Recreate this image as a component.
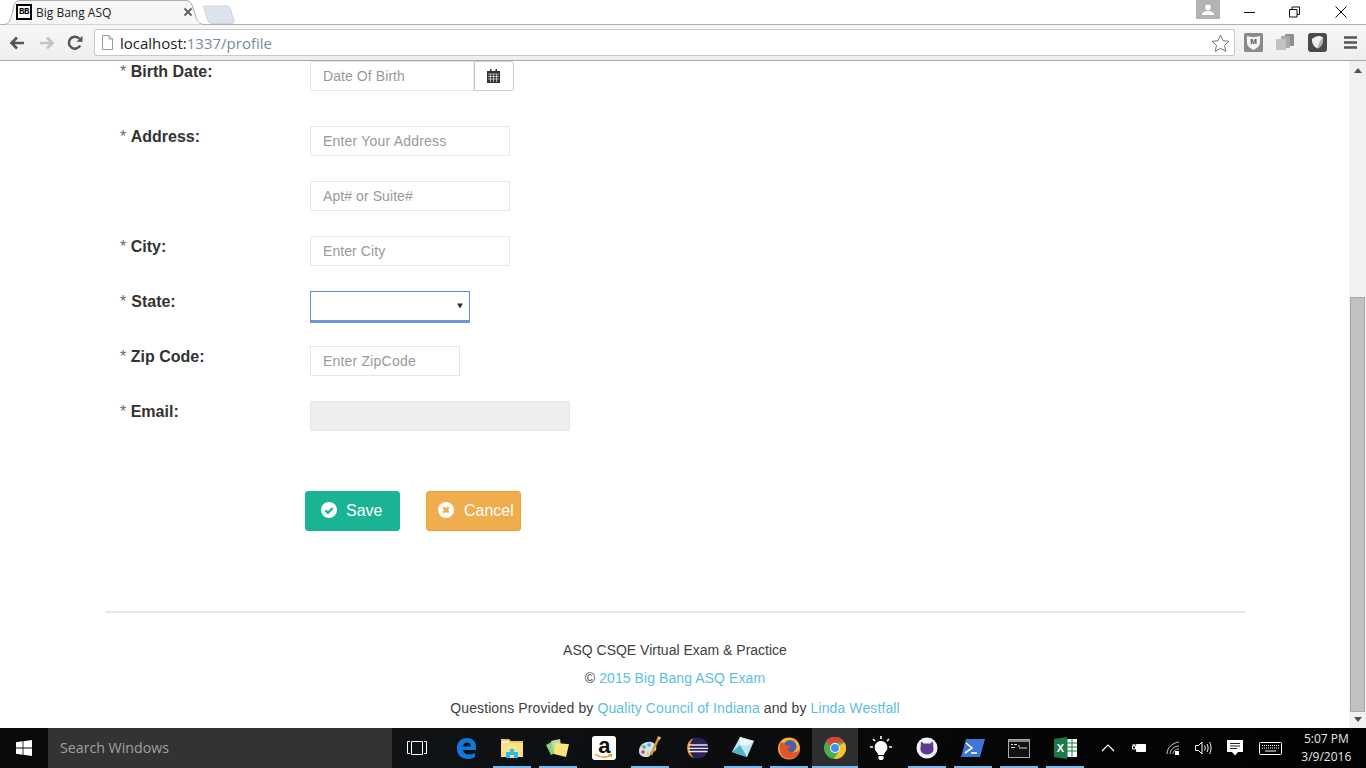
<div class="screen">
  <header class="chrome">
    <div class="tabstrip">
      <div class="tab">
        <svg class="tabshape" width="200" height="25" viewBox="0 0 200 25"><path d="M0 24.500C5 24 6 21 8 14L10 5C11 2 13 .5 16 .5H182C185 .5 187 2 188 5L191 14C193 21 195 24 200 24.500" fill="#f6f6f6" stroke="#b0b0b0"/></svg>
        <span class="favicon">BB</span>
        <span class="tabtitle">Big Bang ASQ</span>
        <svg class="tabclose" width="10" height="10" viewBox="0 0 10 10"><path d="M1.500 1.500l7 7M8.500 1.500l-7 7" stroke="#5a5a5a" stroke-width="1.800"/></svg>
      </div>
      <svg class="newtab" width="32" height="19" viewBox="0 0 32 19"><path d="M.5 1H24C26 1 27 2 27.500 4L31 16C31.500 18 30 18.500 29 18.500H9C7 18.500 6 18 5 16L1 3C.7 2 0 1 .5 1Z" fill="#dde3ec" stroke="#cfd4dc"/></svg>
      <div class="spacer"></div>
      <div class="avatar"><svg width="12" height="12" viewBox="0 0 12 12"><circle cx="6" cy="3.400" r="2.800" fill="#fff"/><path d="M0 11c0-3 3-4 6-4s6 1 6 4z" fill="#fff"/></svg></div>
      <div class="winbtns">
        <svg width="12" height="12" viewBox="0 0 12 12"><path d="M0 6.500h11" stroke="#111"/></svg>
        <svg width="12" height="12" viewBox="0 0 12 12"><path d="M.5 3.500h7.500v7.500h-7.500zM3 3.500V1h7.500v7.500H8" fill="none" stroke="#111"/></svg>
        <svg width="14" height="14" viewBox="0 0 14 14"><path d="M1.500 1.500l11 11M12.500 1.500l-11 11" stroke="#111"/></svg>
      </div>
    </div>
    <div class="toolbar">
      <svg class="nav" width="16" height="14" viewBox="0 0 16 14"><path d="M15 7H3M8 1.500 2.500 7 8 12.500" fill="none" stroke="#555" stroke-width="2.600"/></svg>
      <svg class="nav fwd" width="16" height="14" viewBox="0 0 16 14"><path d="M1 7h12M8 1.500 13.500 7 8 12.500" fill="none" stroke="#c4c4c4" stroke-width="2.600"/></svg>
      <svg class="nav reload" width="16" height="16" viewBox="0 0 16 16"><path d="M13.200 10.500A6 6 0 1 1 12.500 3.800" fill="none" stroke="#555" stroke-width="2.500"/><path d="M9.500 6.800H15.500V.8z" fill="#555"/></svg>
      <div class="omnibox">
        <svg width="11" height="15" viewBox="0 0 11 15"><path d="M.5.5H7L10.500 4V14.500H.5zM7 .5V4h3.500" fill="#fff" stroke="#9a9a9a"/></svg>
        <span class="url"><b>localhost:</b>1337/profile</span>
        <svg class="star" width="19" height="18" viewBox="0 0 19 18"><path d="M9.500 1l2.500 5.700 6 .6-4.500 4.100 1.300 6-5.300-3.100-5.300 3.100 1.300-6L1 7.300l6-.6z" fill="#fff" stroke="#777"/></svg>
      </div>
      <div class="exts">
        <svg width="19" height="19" viewBox="0 0 19 19"><rect width="19" height="19" rx="1.500" fill="#8b8b8b"/><path d="M3 3c4 1.200 9 1.200 13 0v7c0 3-3 5-6.500 7C6 15 3 13 3 10z" fill="#f4f4f4"/><text x="9.500" y="11" font-size="8" font-weight="700" text-anchor="middle" fill="#555" font-family="Liberation Sans">M</text></svg>
        <svg width="19" height="18" viewBox="0 0 19 18"><rect x="9" y="1" width="9" height="12" rx="1" fill="#8f8f8f"/><rect x="5" y="3" width="9" height="12" rx="1" fill="#a9a9a9"/><rect x="0" y="6" width="10" height="11" rx="1" fill="#c2c2c2"/></svg>
        <svg width="19" height="19" viewBox="0 0 19 19"><rect width="19" height="19" rx="3" fill="#4a4a4a"/><path d="M4 6c2-2 5-3 7-3 1.500 0 3 .6 4 1.500.5 5-1.500 9-5.500 11C6 14 3.500 10 4 6z" fill="#f0f0f0"/><path d="M15 4.500C13 6 11 9 9.500 15.500 13.500 13.500 15.500 9.500 15 4.500z" fill="#b0b0b0"/></svg>
      </div>
      <svg class="menu" width="14" height="13" viewBox="0 0 14 13"><path d="M0 1.500h13M0 6.500h13M0 11.500h13" stroke="#555" stroke-width="2.600"/></svg>
    </div>
  </header>

  <div class="viewport">
    <main class="page">
      <form class="form">
        <div class="row birth">
          <div class="label"><i>*</i> <b>Birth Date:</b></div>
          <div class="group">
            <input class="w164" placeholder="Date Of Birth" />
            <button type="button" class="calbtn" aria-label="Open calendar">
              <svg width="13" height="14" viewBox="0 0 13 14"><path d="M0 2h13v12H0z" fill="#333"/><path d="M3 0h1.500v3H3zM8.500 0H10v3H8.500z" fill="#333"/><path d="M1 5h11M1 7.500h11M1 10h11M3.500 5v8M6.500 5v8M9.500 5v8" stroke="#fff" stroke-width=".6"/></svg>
            </button>
          </div>
        </div>
        <div class="row">
          <div class="label"><i>*</i> <b>Address:</b></div>
          <input class="w200 wide" placeholder="Enter Your Address" />
        </div>
        <div class="row">
          <div class="label"></div>
          <input class="w200" placeholder="Apt# or Suite#" />
        </div>
        <div class="row">
          <div class="label"><i>*</i> <b>City:</b></div>
          <input class="w200" placeholder="Enter City" />
        </div>
        <div class="row">
          <div class="label"><i>*</i><b class="state">State:</b></div>
          <div class="selectwrap">
            <select aria-label="State"><option></option></select>
            <svg width="6" height="6" viewBox="0 0 6 6"><path d="M0 .5h6L3 5.500z" fill="#333"/></svg>
          </div>
        </div>
        <div class="row">
          <div class="label"><i>*</i> <b>Zip Code:</b></div>
          <input class="w150 wide" placeholder="Enter ZipCode" />
        </div>
        <div class="row">
          <div class="label"><i>*</i> <b>Email:</b></div>
          <input class="w260" disabled />
        </div>
        <div class="actions">
          <button type="button" class="btn save">
            <svg width="16" height="16" viewBox="0 0 16 16"><circle cx="8" cy="8" r="8" fill="#fff"/><path d="M4.300 8.200l2.600 2.600 4.800-4.800" fill="none" stroke="#1ab394" stroke-width="2.300"/></svg>
            Save
          </button>
          <button type="button" class="btn cancel">
            <svg width="16" height="16" viewBox="0 0 16 16"><circle cx="8" cy="8" r="8" fill="#fff"/><path d="M5.300 5.300l5.400 5.400M10.700 5.300l-5.400 5.400" stroke="#f0ad4e" stroke-width="2.500"/></svg>
            Cancel
          </button>
        </div>
      </form>
      <footer class="footer">
        <p>ASQ CSQE Virtual Exam &amp; Practice</p>
        <p class="p2">© <a href="#top">2015 Big Bang ASQ Exam</a></p>
        <p class="p3">Questions Provided by <a href="#top">Quality Council of Indiana</a> and by <a href="#top">Linda Westfall</a></p>
      </footer>
    </main>
    <aside class="scrollbar">
      <svg class="arrow" width="8" height="5" viewBox="0 0 8 5"><path d="M4 0l4 5H0z" fill="#505050"/></svg>
      <div class="thumb"></div>
      <svg class="arrow" width="8" height="5" viewBox="0 0 8 5"><path d="M4 5l4-5H0z" fill="#505050"/></svg>
    </aside>
  </div>

  <nav class="taskbar">
    <div class="start"><svg width="16" height="16" viewBox="0 0 16 16"><path d="M0 2.300 6.600 1.300V7.500H0zM7.400 1.200 16 0V7.500H7.400zM0 8.400H6.600V14.700L0 13.700zM7.400 8.400H16V16L7.400 14.800z" fill="#fff"/></svg></div>
    <div class="search">Search Windows</div>
    <div class="taskview"><svg width="20" height="14" viewBox="0 0 20 14"><path d="M3 .5H.5v12H3M17 .5h2.500v12H17M4.500.5h11v13h-11z" fill="none" stroke="#fff"/></svg></div>
    <div class="apps">
      <div class="app"><svg width="20" height="21" viewBox="0 0 20 21"><path d="M1 10C1 4 5 0 11 0c5 0 9 3 9 9v3H7c.5 3 3 4.500 6 4.500 2 0 4-.5 6-1.500v4c-2 1.500-5 2-7 2-6 0-11-3.500-11-10zM7 8.500h8C15 6 13 4.500 11 4.500S7.300 6 7 8.500z" fill="#0f78d8"/></svg></div>
      <div class="app on"><svg width="22" height="20" viewBox="0 0 22 20"><path d="M0 1h8l2 2h12v16H0z" fill="#f2c94e"/><path d="M0 5h22v14H0z" fill="#fbe08a"/><path d="M1 3h7v2H1z" fill="#fff"/><path d="M5 14h4v-3h4v3h4v6H5z" fill="#2cb9ee"/><path d="M9 17h4v3H9z" fill="#fbe08a"/></svg></div>
      <div class="app on"><svg width="24" height="20" viewBox="0 0 24 20"><path d="M0 7 9 2 13 13 5 17z" fill="#8fd07e"/><path d="M5 3 14 1 16 13 8 15z" fill="#b9d9a6"/><path d="M9 5l12 1 2 0-3 13-12-3z" fill="#fbe37a"/></svg></div>
      <div class="app"><div class="amazon"><span>a</span><svg width="19" height="6" viewBox="0 0 19 6"><path d="M1 1c5 4 11 4 16 1" fill="none" stroke="#f19b1c" stroke-width="1.500"/><path d="M14 1h4v3.500z" fill="#f19b1c"/></svg></div></div>
      <div class="app on"><svg width="24" height="24" viewBox="0 0 24 24"><path d="M1 15C1 9 7 5 13 6c5 1 6 5 5 8-1 2-3 1-5 2-1 2 0 5-4 5-5 0-8-2-8-6z" fill="#cfe2f2"/><circle cx="6" cy="11" r="1.800" fill="#63b04f"/><circle cx="11" cy="9" r="1.800" fill="#5da7dd"/><circle cx="5" cy="16" r="1.800" fill="#d9483b"/><circle cx="10" cy="18" r="1.500" fill="#efc440"/><path d="M21 1 13 19" stroke="#e8921e" stroke-width="2.400"/><path d="M20 0l3 1.500-1.500 3z" fill="#e7cda0"/></svg></div>
      <div class="app"><svg width="24" height="22" viewBox="0 0 24 22"><circle cx="13" cy="11" r="10.500" fill="#2c2255"/><path d="M9 .8A11 11 0 0 0 9 21.200 14 14 0 0 1 9 .8z" fill="#f7941e"/><path d="M3.500 8h19M3 11.300h20M3.500 14.500h19" stroke="#e8e6f4" stroke-width="1.300"/></svg></div>
      <div class="app on"><svg width="22" height="22" viewBox="0 0 22 22"><path d="M8 0 22 4 15 20 0 15z" fill="#bfe6ef"/><path d="M0 15 8 8 15 20z" fill="#4fb4c9"/><path d="M8 0 22 4 15 9 8 8z" fill="#e9f7fa"/></svg></div>
      <div class="app on"><svg width="22" height="23" viewBox="0 0 22 23"><circle cx="11" cy="11.500" r="11" fill="#f8b13a"/><circle cx="12" cy="9.500" r="6.500" fill="#4a5fa8"/><path d="M3 5C1 9 1 14 3.500 18c3 4 9 5 13.500 2.500 3.500-2 5-6 5-9-1 2-3 3.500-6 4-3 .3-6-1.500-6.500-4 1.500-1 3-1 4-.8C12.500 9 10.500 8 8.500 8.500 7 8 6 7 5.500 5.500 4.500 6 3.500 6 3 5z" fill="#e2552a"/><path d="M15 1c3 1 5 3 6 6-1.500-2-3.500-3.500-6-4z" fill="#f47b20"/></svg></div>
      <div class="app on active"><svg width="22" height="22" viewBox="0 0 22 22"><circle cx="11" cy="11" r="11" fill="#4cad4f"/><path d="M11 0a11 11 0 0 1 9.500 5.500H11A5.500 5.500 0 0 0 5.800 9L2 3.800A11 11 0 0 1 11 0z" fill="#dc4437"/><path d="M20.500 5.500A11 11 0 0 1 10 22l4.500-7.800a5.500 5.500 0 0 0 1.200-6z" fill="#fbc02d"/><circle cx="11" cy="11" r="5" fill="#fff"/><circle cx="11" cy="11" r="4" fill="#4a8cf0"/></svg></div>
      <div class="app"><svg width="22" height="24" viewBox="0 0 22 24"><path d="M11 5a6.500 6.500 0 0 0-4 11.500c1 1 1 2 1 2.500h6c0-.5 0-1.500 1-2.500A6.500 6.500 0 0 0 11 5z" fill="#fff"/><path d="M8.500 20h5v2.500l-1 1.500h-3l-1-1.500z" fill="#fff"/><path d="M11 0v3M3 3l2 2M19 3l-2 2M0 11h3M19 11h3" stroke="#fff" stroke-width="1.600"/></svg></div>
      <div class="app on"><svg width="22" height="22" viewBox="0 0 22 22"><circle cx="11" cy="11" r="10.500" fill="#f3f1f7"/><path d="M5 4.500l3.300 2.300c1.800-.4 3.600-.4 5.400 0L17 4.500l.4 6c.8 3-1 7-6.400 7s-7.200-4-6.400-7z" fill="#5c3a95"/></svg></div>
      <div class="app on"><svg width="24" height="18" viewBox="0 0 24 18"><path d="M5 0H24L19 18H0z" fill="#3f76d4"/><path d="M5 4l6 5-7 5" fill="none" stroke="#fff" stroke-width="1.600"/><path d="M10 14h6" stroke="#fff" stroke-width="1.600"/></svg></div>
      <div class="app on"><svg width="22" height="19" viewBox="0 0 22 19"><rect x=".5" y=".5" width="21" height="18" fill="#111" stroke="#aaa"/><path d="M1 1h20v2H1z" fill="#888"/><path d="M3 5.500h2M6 5.500h3M10 7h2M3 8.500h4M11 9h8" stroke="#ddd"/></svg></div>
      <div class="app on"><svg width="23" height="22" viewBox="0 0 23 22"><rect x="8" y="2" width="15" height="18" fill="#fff"/><path d="M13 2v18M18 2v18M8 6h15M8 10h15M8 14h15" stroke="#1d7a45"/><path d="M0 2 13 0V22L0 20z" fill="#1d7a45"/><text x="6.500" y="15" font-size="11" font-weight="700" text-anchor="middle" fill="#fff" font-family="Liberation Sans">X</text></svg></div>
    </div>
    <div class="tray">
      <svg class="t-up" width="14" height="8" viewBox="0 0 14 8"><path d="M1 7l6-6 6 6" fill="none" stroke="#fff" stroke-width="1.200"/></svg>
      <svg class="t-batt" width="15" height="10" viewBox="0 0 15 10"><path d="M4.500 1.500h9v7h-9z" fill="#fff" stroke="#fff"/><path d="M.5 3h3v3h-3zM1.200 1v2M2.800 1v2M4 5h1" stroke="#fff" fill="none"/></svg>
      <svg class="t-wifi" width="13" height="14" viewBox="0 0 13 14"><path d="M1 13C1 7 6 2 13 1M4 13c0-4 4-8 9-8M7 13c0-2 2-5 6-5" fill="none" stroke="#ccc" stroke-width="1"/><path d="M9 10h4v4H9z" fill="#fff"/></svg>
      <svg class="t-vol" width="17" height="14" viewBox="0 0 17 14"><path d="M.5 4.500h3L7 1v12L3.500 9.500h-3z" fill="none" stroke="#fff"/><path d="M9.500 4.500c1 1.500 1 3.500 0 5M12 3c1.500 2.500 1.500 5.500 0 8M14.500 1c2 3.500 2 8.500 0 12" fill="none" stroke="#fff"/></svg>
      <svg class="t-note" width="16" height="16" viewBox="0 0 16 16"><path d="M0 0h16v12h-5l-3 3.500L5 12H0z" fill="#fff"/><path d="M3 3.500h10M3 6h10M3 8.500h7" stroke="#222"/></svg>
      <svg class="t-kbd" width="23" height="13" viewBox="0 0 23 13"><rect x=".5" y=".5" width="22" height="12" rx="1" fill="none" stroke="#fff"/><path d="M3 3.500h17M3 6h17" stroke="#fff" stroke-dasharray="1 1"/><path d="M6 9h11" stroke="#fff"/></svg>
      <div class="clock"><span>5:07 PM</span><span>3/9/2016</span></div>
    </div>
  </nav>
</div>

<style>
  :global(body) { margin: 0; }
  .screen {
    width: 1366px; height: 768px; display: flex; flex-direction: column; overflow: hidden;
    font-family: "Liberation Sans", Arial, sans-serif; background: #fff; color: #333;
  }

  /* browser chrome */
  .chrome { height: 61px; flex: none; display: flex; flex-direction: column; box-sizing: border-box; border-bottom: 1px solid #a8a8a8; }
  .tabstrip { height: 25px; flex: none; display: flex; align-items: flex-start; padding-left: 4px; box-sizing: border-box; background: #fff; border-bottom: 1px solid #b0b0b0; }
  .tab { position: relative; width: 200px; height: 25px; display: flex; align-items: center; padding: 0 0 1px 12px; box-sizing: border-box; flex: none; }
  .tabshape { position: absolute; left: 0; top: 0; }
  .favicon {
    position: relative; width: 16px; height: 16px; box-sizing: border-box; border: 2px solid #000; background: #fff;
    font: 700 9px/12px "Liberation Mono", monospace; text-align: center; color: #000; letter-spacing: -.5px;
  }
  .tabtitle { position: relative; margin-left: 4px; font: 12px "Open Sans", "Noto Sans", sans-serif; color: #222; width: 146px; white-space: nowrap; }
  .tabclose { position: relative; margin-left: 1px; }
  .newtab { margin: 5px 0 0 -1px; }
  .spacer { flex: 1; }
  .avatar { width: 24px; height: 19px; background: #b3b3b3; display: flex; align-items: center; justify-content: center; }
  .winbtns { width: 146px; display: flex; justify-content: space-between; align-items: center; height: 24px; padding: 0 18px 0 24px; box-sizing: border-box; }
  .toolbar { flex: 1; display: flex; align-items: center; background: linear-gradient(#f7f7f7, #eeeeee); padding-left: 9px; }
  .nav { flex: none; }
  .fwd { margin-left: 14px; }
  .reload { margin-left: 12px; }
  .omnibox {
    margin-left: 11px; width: 1141px; height: 27px; box-sizing: border-box; flex: none; background: #fff; border: 1px solid #c8c8c8; border-radius: 2px;
    display: flex; align-items: center; padding-left: 7px;
  }
  .url { margin-left: 7px; font: 15px "Open Sans", "Noto Sans", sans-serif; color: #7a8a99; flex: 1; }
  .url b { font-weight: 400; color: #222; }
  .star { margin-right: 4px; }
  .exts { display: flex; gap: 13px; margin-left: 9px; width: 83px; flex: none; }
  .menu { margin-left: 17px; flex: none; }

  /* page */
  .viewport { flex: 1; display: flex; min-height: 0; }
  .page { flex: 1; min-width: 0; padding: 0 104px 0 105px; display: flex; flex-direction: column; }
  .form { display: flex; flex-direction: column; padding-left: 15px; }
  .row { display: flex; align-items: flex-start; height: 30px; margin-bottom: 25px; }
  .row.birth { margin-bottom: 35px; }
  .label { width: 190px; flex: none; font-size: 16px; line-height: 21px; white-space: nowrap; color: #676a6c; }
  .label i { font-style: normal; }
  .label b { color: #333; }
  .label b.state { margin-left: 5px; }
  input {
    height: 30px; box-sizing: border-box; padding: 0 12px; border: 1px solid #e5e6e7; background: #fff; font: 14px "Liberation Sans", Arial, sans-serif; outline: none; display: block;
  }
  input::placeholder { color: #999; opacity: 1; letter-spacing: .08px; }
  input.wide::placeholder { letter-spacing: .2px; }
  input:disabled { background: #eee; }
  .w150 { width: 150px; }
  .w164 { width: 164px; }
  .w200 { width: 200px; }
  .w260 { width: 260px; }
  .group { display: flex; }
  .calbtn { width: 40px; height: 30px; box-sizing: border-box; border: 1px solid #ccc; border-radius: 0 3px 3px 0; background: #fff; display: flex; align-items: center; justify-content: center; padding: 0 2px 0 0; }
  .selectwrap { position: relative; width: 160px; height: 32px; }
  select { display: block; appearance: none; width: 160px; height: 32px; box-sizing: border-box; border: 1px solid #5f8fdc; border-bottom: 3px solid #6f93d3; border-radius: 1px; background: #fff; outline: none; }
  .selectwrap svg { position: absolute; left: 147px; top: 12px; }
  .actions { display: flex; gap: 26px; margin: 35px 0 0 185px; }
  .btn {
    height: 40px; width: 95px; box-sizing: border-box; border-radius: 3px; font: 16px "Liberation Sans", Arial, sans-serif; color: #fff;
    display: flex; align-items: center; padding: 0 0 0 15px; gap: 9px; border: 1px solid;
  }
  .btn svg { margin-top: -2px; }
  .save { background: #1ab394; border-color: #1ab394; }
  .cancel { background: #f0ad4e; border-color: #eea236; padding-left: 11px; gap: 10px; }
  .footer { margin-top: 80px; border-top: 2px solid #e7e7e7; text-align: center; font-size: 14px; color: #404040; }
  .footer p { margin: 27px 0 0; line-height: 20px; }
  .footer .p2 { margin-top: 8px; letter-spacing: .08px; }
  .footer .p3 { margin-top: 10px; letter-spacing: .11px; }
  .footer a { color: #5bc0de; text-decoration: none; }

  /* scrollbar */
  .scrollbar { width: 17px; flex: none; background: #f1f1f1; display: flex; flex-direction: column; align-items: center; padding: 7px 0 6px; box-sizing: border-box; }
  .thumb { width: 15px; flex: none; height: 415px; margin-top: 224px; margin-bottom: 5px; background: #c1c1c1; border: 1px solid #a8a8a8; box-sizing: border-box; }
  .arrow { flex: none; }

  /* taskbar */
  .taskbar {
    height: 40px; flex: none; display: flex; align-items: center; color: #fff;
    background: linear-gradient(100deg, #07090b 0%, #101316 30%, #0a0c0e 55%, #050505 75%, #020202 100%);
  }
  .start { width: 48px; height: 40px; display: flex; align-items: center; justify-content: center; flex: none; }
  .search { width: 344px; height: 40px; flex: none; background: #333; color: #a0a0a0; font: 14.2px/40px "Open Sans", "Noto Sans", sans-serif; padding-left: 12px; box-sizing: border-box; }
  .taskview { width: 51px; height: 40px; display: flex; align-items: center; justify-content: center; flex: none; padding-right: 2px; box-sizing: border-box; }
  .apps { display: flex; flex: none; }
  .app { position: relative; width: 46.1px; height: 40px; display: flex; align-items: center; justify-content: center; box-sizing: border-box; }
  .app svg { flex: none; }
  .app.on::after { content: ""; position: absolute; left: 4px; right: 4px; bottom: 0; height: 2px; background: #76b9ed; }
  .app.active { background: #2e2e2e; }
  .app.active::after { left: 0; right: 0; }
  .amazon { width: 24px; height: 24px; background: #fff; border-radius: 3px; position: relative; display: flex; justify-content: center; }
  .amazon span { font: 700 22px/20px "Liberation Sans", sans-serif; color: #111; }
  .amazon svg { position: absolute; left: 2px; bottom: 1px; }
  .tray { flex: 1; display: flex; align-items: center; height: 40px; padding-left: 13px; }
  .t-batt { margin-left: 17px; }
  .t-wifi { margin-left: 19px; }
  .t-vol { margin-left: 16px; }
  .t-note { margin-left: 15px; }
  .t-kbd { margin-left: 16px; }
  .clock { margin-left: 20px; display: flex; flex-direction: column; align-items: center; width: 48px; font: 12px/18px "Open Sans", "Noto Sans", sans-serif; color: #e6e6e6; white-space: nowrap; }
</style>
